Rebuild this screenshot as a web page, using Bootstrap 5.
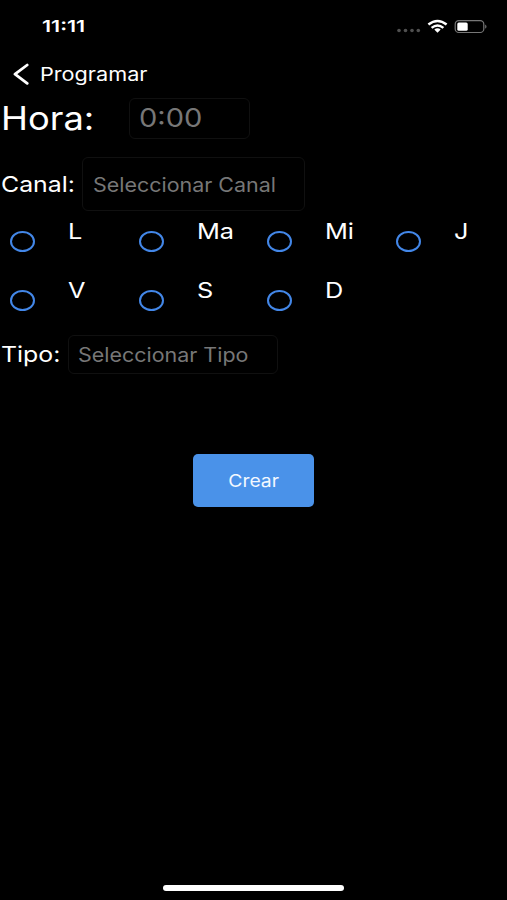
<!DOCTYPE html>
<html lang="es">
<head>
<meta charset="utf-8">
<meta name="viewport" content="width=device-width, initial-scale=1">
<title>Programar</title>
<link rel="stylesheet" href="https://cdn.jsdelivr.net/npm/bootstrap@5.3.0/dist/css/bootstrap.min.css">
<style>
body{background:#000;color:#fff;font-family:Inter,"Liberation Sans",sans-serif;height:900px;overflow:hidden}
.wide{display:inline-block;transform:scaleX(var(--w,1.15));transform-origin:0 50%;white-space:nowrap;line-height:1}
.status-bar{height:53px;padding:0 19px 0 42px}
.clock{font-size:16.5px;font-weight:600;--w:1.3}
.title-bar{height:43px;padding-left:12px}
.title-bar svg{margin-bottom:2px}
.title-text{font-size:18.5px;--w:1.17;margin-left:10px}
.field{border:1px solid #101010;border-radius:6px;color:#777}
.row-hora{height:44px;padding-left:1px}
.label-hora{font-size:33px;width:128px;--w:1.1;padding-top:2px}
.field-hora{width:121px;height:41px;padding-left:9px;font-size:25.5px;--w:1.14}
.row-canal{margin-top:16px;height:56px}
.label-text{font-size:22px;padding-left:1px}
.label-canal{width:82px;--w:1.13}
.label-tipo{width:68px;--w:1.13}
.field-canal{width:223px;height:54px;padding:3px 0 0 10px;font-size:19.5px;--w:1.1}
.days{height:118px;width:514px}
.day{height:59px;width:128.5px;padding:8px 0 0 10px}
.ring{width:25px;height:21px;border:2px solid #4387e8;border-radius:50%;margin-top:11px}
.day-name{font-size:22px;margin-left:33px;--w:1.15}
.row-tipo{margin-top:5px;height:39px}
.field-tipo{width:210px;height:39px;padding:2px 0 0 9px;font-size:19.5px;--w:1.1}
.btn-crear{margin-top:80px;width:121px;height:53px;background:#4a92e9;border-radius:5px;color:#f2f8ff;font-size:17.3px;--w:1.12}
.btn-crear:hover{background:#4a92e9;color:#fff}
.btn-crear .wide{transform-origin:50% 50%}
.home-bar{width:181px;height:6px;margin-bottom:9px}
</style>
</head>
<body class="d-flex flex-column">
<header>
  <div class="status-bar d-flex align-items-center justify-content-between">
    <span class="wide clock">11:11</span>
    <svg width="92" height="20" viewBox="0 0 92 20">
      <g fill="#505050"><circle cx="3" cy="13.5" r="1.8"/><circle cx="9.5" cy="13.5" r="1.8"/><circle cx="16" cy="13.5" r="1.8"/><circle cx="22.3" cy="13.5" r="1.8"/></g>
      <g fill="none" stroke="#fff" stroke-width="2.5"><path d="M32.4 7.6Q41.5 0.3 50.6 7.6"/><path d="M35.6 10.9Q41.5 6.1 47.4 10.9"/></g>
      <path d="M38.3 12.6Q41.5 10.1 44.7 12.6L41.5 15.7Z" fill="#fff"/>
      <rect x="59.2" y="3.7" width="28.6" height="11.8" rx="3.6" fill="none" stroke="#777" stroke-width="1.2"/>
      <rect x="61.3" y="5.4" width="10.4" height="8.4" rx="1.6" fill="#fff"/>
      <path d="M89.2 7.4Q91.8 9.6 89.2 11.8Z" fill="#777"/>
    </svg>
  </div>
  <div class="title-bar d-flex align-items-center">
    <svg width="18" height="22" viewBox="0 0 18 22"><path d="M15.2 2L3 11.2L15.2 20.3" fill="none" stroke="#fff" stroke-width="2.8" stroke-linecap="round" stroke-linejoin="round"/></svg>
    <span class="wide title-text">Programar</span>
  </div>
</header>
<main class="d-flex flex-column">
  <div class="row-hora d-flex align-items-center">
    <div class="label-hora"><span class="wide">Hora:</span></div>
    <div class="field field-hora d-flex align-items-center"><span class="wide">0:00</span></div>
  </div>
  <div class="row-canal d-flex align-items-center">
    <div class="label-text label-canal"><span class="wide">Canal:</span></div>
    <div class="field field-canal d-flex align-items-center"><span class="wide">Seleccionar Canal</span></div>
  </div>
  <div class="days d-flex flex-wrap align-content-start">
    <div class="day d-flex align-items-start"><i class="ring"></i><span class="wide day-name">L</span></div>
    <div class="day d-flex align-items-start"><i class="ring"></i><span class="wide day-name">Ma</span></div>
    <div class="day d-flex align-items-start"><i class="ring"></i><span class="wide day-name">Mi</span></div>
    <div class="day d-flex align-items-start"><i class="ring"></i><span class="wide day-name">J</span></div>
    <div class="day d-flex align-items-start"><i class="ring"></i><span class="wide day-name">V</span></div>
    <div class="day d-flex align-items-start"><i class="ring"></i><span class="wide day-name">S</span></div>
    <div class="day d-flex align-items-start"><i class="ring"></i><span class="wide day-name">D</span></div>
  </div>
  <div class="row-tipo d-flex align-items-center">
    <div class="label-text label-tipo"><span class="wide">Tipo:</span></div>
    <div class="field field-tipo d-flex align-items-center"><span class="wide">Seleccionar Tipo</span></div>
  </div>
  <button type="button" class="btn btn-crear border-0 p-0 mx-auto"><span class="wide">Crear</span></button>
</main>
<div class="home-bar bg-white rounded-pill mx-auto mt-auto"></div>
<script src="https://cdn.jsdelivr.net/npm/bootstrap@5.3.0/dist/js/bootstrap.bundle.min.js"></script>
</body>
</html>
